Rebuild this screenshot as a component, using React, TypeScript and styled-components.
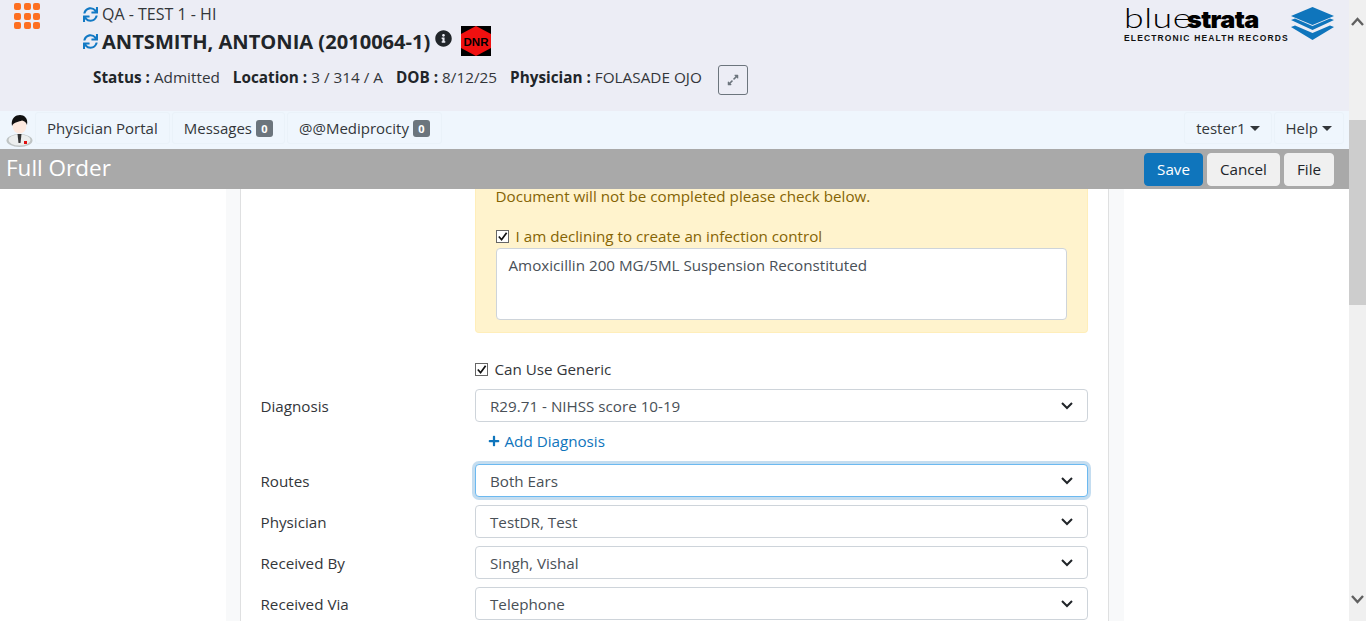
import styled, { createGlobalStyle } from "styled-components";
import { FaExpandAlt, FaInfoCircle, FaPlus, FaSync } from "react-icons/fa";

const GlobalStyle = createGlobalStyle`
  * {
    box-sizing: border-box;
  }
  html,
  body {
    margin: 0;
    height: 100%;
    overflow: hidden;
    background: #fff;
    color: #212529;
    font-family: "Open Sans", "Liberation Sans", sans-serif;
    font-size: 15.2px;
  }
`;

const Shell = styled.div`
  display: flex;
  height: 621px;
  overflow: hidden;
`;

const Page = styled.div`
  flex: 1;
  min-width: 0;
  display: flex;
  flex-direction: column;
`;

const Scrollbar = styled.div`
  width: 17px;
  background: #f0f0f0;
  display: flex;
  flex-direction: column;
  align-items: center;
  padding: 17px 0 17px;
`;

const ScrollArrow = styled.svg`
  width: 13px;
  height: 9px;
  flex: none;
  fill: none;
  stroke: #606060;
  stroke-width: 2.4;
`;

const ScrollThumb = styled.div`
  align-self: stretch;
  height: 185px;
  margin-top: 94px;
  margin-bottom: auto;
  background: #cdcdcd;
`;

const Header = styled.header`
  height: 111px;
  flex: none;
  background: #ecedf5;
  display: flex;
  justify-content: space-between;
  padding: 2px 14px 0 14px;
`;

const HeaderLeft = styled.div`
  display: flex;
`;

const AppGrid = styled.div`
  display: grid;
  grid-template-columns: repeat(3, 7px);
  grid-auto-rows: 7px;
  gap: 2.5px;
  width: 26px;
  height: 26px;
  margin-top: 1px;
`;

const AppDot = styled.span`
  background: #fd6f21;
  border-radius: 2px;
`;

const PatientInfo = styled.div`
  margin-left: 43px;
  display: flex;
  flex-direction: column;
`;

const FacilityLine = styled.div`
  display: flex;
  align-items: center;
  gap: 4px;
  height: 24px;
  color: #33363a;
  font-size: 16px;
`;

const NameLine = styled.div`
  display: flex;
  align-items: center;
  gap: 4px;
  height: 30px;
  font-size: 20.1px;
  font-weight: 700;
  color: #212529;
`;

const SyncIcon = styled(FaSync)`
  color: #1279c4;
  width: 15px;
  height: 15px;
  flex: none;
`;

const InfoIcon = styled(FaInfoCircle)`
  width: 17px;
  height: 17px;
  margin: -6px 0 0 1px;
  color: #212529;
`;

const DnrBadge = styled.svg`
  width: 30px;
  height: 30px;
  margin: 0 0 0 5px;
`;

const StatusLine = styled.div`
  display: flex;
  align-items: center;
  gap: 13px;
  margin: 3px 0 0 10px;
  font-size: 15.3px;
  color: #33363a;
`;

const StatusLabel = styled.b`
  color: #212529;
  font-weight: 700;
`;

const ExpandButton = styled.button`
  width: 30px;
  height: 30px;
  margin: 6px 0 0 3px;
  display: flex;
  align-items: center;
  justify-content: center;
  background: transparent;
  border: 1px solid #6c757d;
  border-radius: 3px;
  color: #6c757d;
  padding: 0;
  font-size: 12px;
`;

const Logo = styled.div`
  display: flex;
  align-items: flex-start;
  gap: 2px;
  margin-top: 4px;
`;

const LogoWords = styled.div`
  display: flex;
  flex-direction: column;
  width: 164px;
`;

const LogoName = styled.div`
  display: flex;
  align-items: baseline;
  height: 24px;
  line-height: 24px;
  font-size: 26px;
  color: #000;
`;

const LogoThin = styled.span`
  font-family: "Lato", sans-serif;
  font-weight: 300;
  font-size: 27px;
  letter-spacing: 0.4px;
  transform: scaleX(1.32);
  transform-origin: left;
  width: 63px;
`;

const LogoBold = styled.span`
  font-family: "Inter", sans-serif;
  font-weight: 900;
  font-size: 24px;
  letter-spacing: -0.6px;
  transform: scaleX(1.05);
  transform-origin: left;
`;

const LogoTagline = styled.div`
  margin-top: 3px;
  font-family: "Liberation Sans", sans-serif;
  font-size: 8.5px;
  font-weight: 700;
  letter-spacing: 1.14px;
  white-space: nowrap;
  color: #111;
`;

const LogoMark = styled.svg`
  width: 45px;
  height: 34px;
  margin-top: 1px;
`;

const Nav = styled.nav`
  height: 38px;
  flex: none;
  background: #eff6fd;
  display: flex;
  align-items: flex-start;
  padding: 1px 3px 0 6px;
`;

const Avatar = styled.svg`
  width: 27px;
  height: 32px;
  flex: none;
  margin: 3px 2px 0 0;
`;

const NavTab = styled.div`
  height: 32px;
  display: flex;
  align-items: center;
  gap: 4px;
  padding: 0 11px;
  margin-right: 2px;
  border: 1px solid #eaf2f9;
  border-radius: 3px;
  font-size: 15px;
  color: #33363a;
`;

const NavSpacer = styled.div`
  flex: 1;
`;

const CountBadge = styled.span`
  background: #6c757d;
  color: #fff;
  font-size: 11px;
  font-weight: 700;
  min-width: 17px;
  height: 17px;
  line-height: 17px;
  text-align: center;
  border-radius: 3px;
`;

const Caret = styled.span`
  width: 0;
  height: 0;
  border-top: 5px solid #33363a;
  border-left: 5px solid transparent;
  border-right: 5px solid transparent;
`;

const TitleBar = styled.div`
  height: 40px;
  flex: none;
  background: #a9a9a9;
  display: flex;
  align-items: center;
  padding: 0 15px 0 6px;
  gap: 4px;
`;

const PageTitle = styled.h1`
  flex: 1;
  margin: -3px 0 0;
  font-size: 22.5px;
  font-weight: 400;
  color: #fff;
`;

const ActionButton = styled.button<{ $primary?: boolean }>`
  height: 33px;
  padding: 0 12px;
  border-radius: 4px;
  border: 1px solid ${(p) => (p.$primary ? "#0f75bc" : "#f0f0f0")};
  background: ${(p) => (p.$primary ? "#0f75bc" : "#f0f0f0")};
  color: ${(p) => (p.$primary ? "#fff" : "#212529")};
  font-family: inherit;
  font-size: 15.2px;
`;

const Content = styled.main`
  flex: 1;
  min-height: 0;
  display: flex;
  justify-content: center;
  padding-left: 1px;
`;

const Container = styled.div`
  width: 898px;
  margin-right: 1px;
  background: #f8f9fa;
  padding: 0 15px 0 14px;
`;

const Card = styled.div`
  height: 100%;
  background: #fff;
  border-left: 1px solid #dfe0e1;
  border-right: 1px solid #dfe0e1;
  padding: 0 20px;
`;

const FormGrid = styled.div`
  display: grid;
  grid-template-columns: 214px 613px;
  row-gap: 8px;
  align-items: center;
`;

const Control = styled.div`
  grid-column: 2;
`;

const FieldLabel = styled.label`
  grid-column: 1;
  color: #33363a;
  font-size: 15.2px;
`;

const Alert = styled.div`
  background: #fff3cd;
  border: 1px solid #ffeeba;
  border-top: none;
  border-radius: 0 0 4px 4px;
  color: #856404;
  padding: 0 20px 12px;
  margin-bottom: 26px;
  font-size: 15.2px;
`;

const AlertText = styled.div`
  height: 15px;
  line-height: 14px;
`;

const AlertCheck = styled.label`
  display: flex;
  align-items: center;
  gap: 6px;
  margin-top: 22px;
  height: 20px;
`;

const Box = styled.span`
  width: 13px;
  height: 13px;
  margin: 0 1px 0 0;
  flex: none;
  background: #fff;
  border: 1px solid #666;
  display: flex;
  align-items: center;
  justify-content: center;
`;

const BoxMark = styled.svg`
  width: 11px;
  height: 11px;
  fill: none;
  stroke: #111;
  stroke-width: 1.9;
`;

const TextBox = styled.div`
  height: 72px;
  margin-top: 2px;
  background: #fff;
  border: 1px solid #ced4da;
  border-radius: 4px;
  padding: 6px 12px;
  color: #495057;
  font-size: 15.2px;
`;

const GenericCheck = styled.label`
  display: flex;
  align-items: center;
  gap: 6px;
  height: 20px;
  margin-bottom: 2px;
  color: #33363a;
  font-size: 15.2px;
`;

const Select = styled.div<{ $focused?: boolean }>`
  height: 33px;
  display: flex;
  align-items: center;
  justify-content: space-between;
  padding: 1px 14px 0 14.5px;
  background: #fff;
  border: 1px solid ${(p) => (p.$focused ? "#6cb9f0" : "#ced4da")};
  border-radius: 4px;
  color: #495057;
  font-size: 15.2px;
  box-shadow: ${(p) => (p.$focused ? "0 0 0 3px rgba(18, 121, 196, 0.25)" : "none")};
`;

const Chevron = styled.svg`
  width: 12px;
  height: 9px;
  margin-top: -2px;
  fill: none;
  stroke: #212529;
  stroke-width: 2;
`;

const AddLink = styled.a`
  display: flex;
  align-items: center;
  gap: 5px;
  height: 26px;
  padding-bottom: 5px;
  margin-left: 13px;
  color: #0f75bc;
  font-size: 15.2px;
`;

const PlusIcon = styled(FaPlus)`
  width: 12px;
  height: 12px;
`;

const CheckMark = () => (
  <Box>
    <BoxMark viewBox="0 0 12 12">
      <path d="M2 6l3 3.500L10.500 2" />
    </BoxMark>
  </Box>
);

const SelectField = ({ label, value, focused }: { label: string; value: string; focused?: boolean }) => (
  <>
    <FieldLabel>{label}</FieldLabel>
    <Control>
      <Select $focused={focused}>
        {value}
        <Chevron viewBox="0 0 12 9">
          <path d="M1 2l5 5 5-5" />
        </Chevron>
      </Select>
    </Control>
  </>
);

export default function App() {
  return (
    <Shell>
      <GlobalStyle />
      <Page>
        <Header>
          <HeaderLeft>
            <AppGrid>
              {Array.from({ length: 9 }).map((_, i) => (
                <AppDot key={i} />
              ))}
            </AppGrid>
            <PatientInfo>
              <FacilityLine>
                <SyncIcon />
                QA - TEST 1 - HI
              </FacilityLine>
              <NameLine>
                <SyncIcon />
                ANTSMITH, ANTONIA (2010064-1)
                <InfoIcon />
                <DnrBadge viewBox="0 0 30 30">
                  <rect width="30" height="30" fill="#000" />
                  <polygon points="15,0 30,8 30,22 15,30 0,22 0,8" fill="#f01010" />
                  <text x="15" y="20" textAnchor="middle" fontSize="11.5" fontWeight="700" fontFamily="Liberation Sans" fill="#000">
                    DNR
                  </text>
                </DnrBadge>
              </NameLine>
              <StatusLine>
                <span>
                  <StatusLabel>Status :</StatusLabel> Admitted
                </span>
                <span>
                  <StatusLabel>Location :</StatusLabel> 3 / 314 / A
                </span>
                <span>
                  <StatusLabel>DOB :</StatusLabel> 8/12/25
                </span>
                <span>
                  <StatusLabel>Physician :</StatusLabel> FOLASADE OJO
                </span>
                <ExpandButton>
                  <FaExpandAlt />
                </ExpandButton>
              </StatusLine>
            </PatientInfo>
          </HeaderLeft>
          <Logo>
            <LogoWords>
              <LogoName>
                <LogoThin>blue</LogoThin>
                <LogoBold>strata</LogoBold>
              </LogoName>
              <LogoTagline>ELECTRONIC HEALTH RECORDS</LogoTagline>
            </LogoWords>
            <LogoMark viewBox="0 0 45 34">
              <polygon points="22.500,0 44,9 22.500,18 1,9" fill="#0f75bc" />
              <polygon points="1,13 5,11.500 22.500,19 40,11.500 44,13 22.500,23" fill="#0f75bc" />
              <polygon points="1,20 5,18.500 22.500,26 40,18.500 44,20 22.500,33" fill="#0f75bc" />
            </LogoMark>
          </Logo>
        </Header>

        <Nav>
          <Avatar viewBox="0 0 27 32">
            <ellipse cx="13.500" cy="25.500" rx="13" ry="6.500" fill="#bfc4c4" />
            <ellipse cx="13.500" cy="25" rx="11" ry="5.500" fill="#eceeee" />
            <polygon points="11.500,19 15.500,19 14.500,28 12.500,28" fill="#333" />
            <ellipse cx="13.500" cy="10.500" rx="7" ry="8" fill="#fde9df" />
            <path d="M6 11C4.500 3 10 0 14 0s8.500 3 7 10c-1-3-3-4-5-4.500-3 1.500-8 1-10 5.500z" fill="#111" />
            <rect x="18" y="26" width="3" height="3" fill="#e01010" />
          </Avatar>
          <NavTab>Physician Portal</NavTab>
          <NavTab>
            Messages <CountBadge>0</CountBadge>
          </NavTab>
          <NavTab>
            @@Mediprocity <CountBadge>0</CountBadge>
          </NavTab>
          <NavSpacer />
          <NavTab>
            tester1 <Caret />
          </NavTab>
          <NavTab>
            Help <Caret />
          </NavTab>
        </Nav>

        <TitleBar>
          <PageTitle>Full Order</PageTitle>
          <ActionButton $primary>Save</ActionButton>
          <ActionButton>Cancel</ActionButton>
          <ActionButton>File</ActionButton>
        </TitleBar>

        <Content>
          <Container>
            <Card>
              <FormGrid>
                <Control>
                  <Alert>
                    <AlertText>Document will not be completed please check below.</AlertText>
                    <AlertCheck>
                      <CheckMark />I am declining to create an infection control
                    </AlertCheck>
                    <TextBox>Amoxicillin 200 MG/5ML Suspension Reconstituted</TextBox>
                  </Alert>
                  <GenericCheck>
                    <CheckMark />
                    Can Use Generic
                  </GenericCheck>
                </Control>
                <SelectField label="Diagnosis" value="R29.71 - NIHSS score 10-19" />
                <Control>
                  <AddLink>
                    <PlusIcon />
                    Add Diagnosis
                  </AddLink>
                </Control>
                <SelectField label="Routes" value="Both Ears" focused />
                <SelectField label="Physician" value="TestDR, Test" />
                <SelectField label="Received By" value="Singh, Vishal" />
                <SelectField label="Received Via" value="Telephone" />
              </FormGrid>
            </Card>
          </Container>
        </Content>
      </Page>

      <Scrollbar>
        <ScrollArrow viewBox="0 0 13 9">
          <path d="M1 8l5.500-6 5.500 6" />
        </ScrollArrow>
        <ScrollThumb />
        <ScrollArrow viewBox="0 0 13 9">
          <path d="M1 1l5.500 6 5.500-6" />
        </ScrollArrow>
      </Scrollbar>
    </Shell>
  );
}
